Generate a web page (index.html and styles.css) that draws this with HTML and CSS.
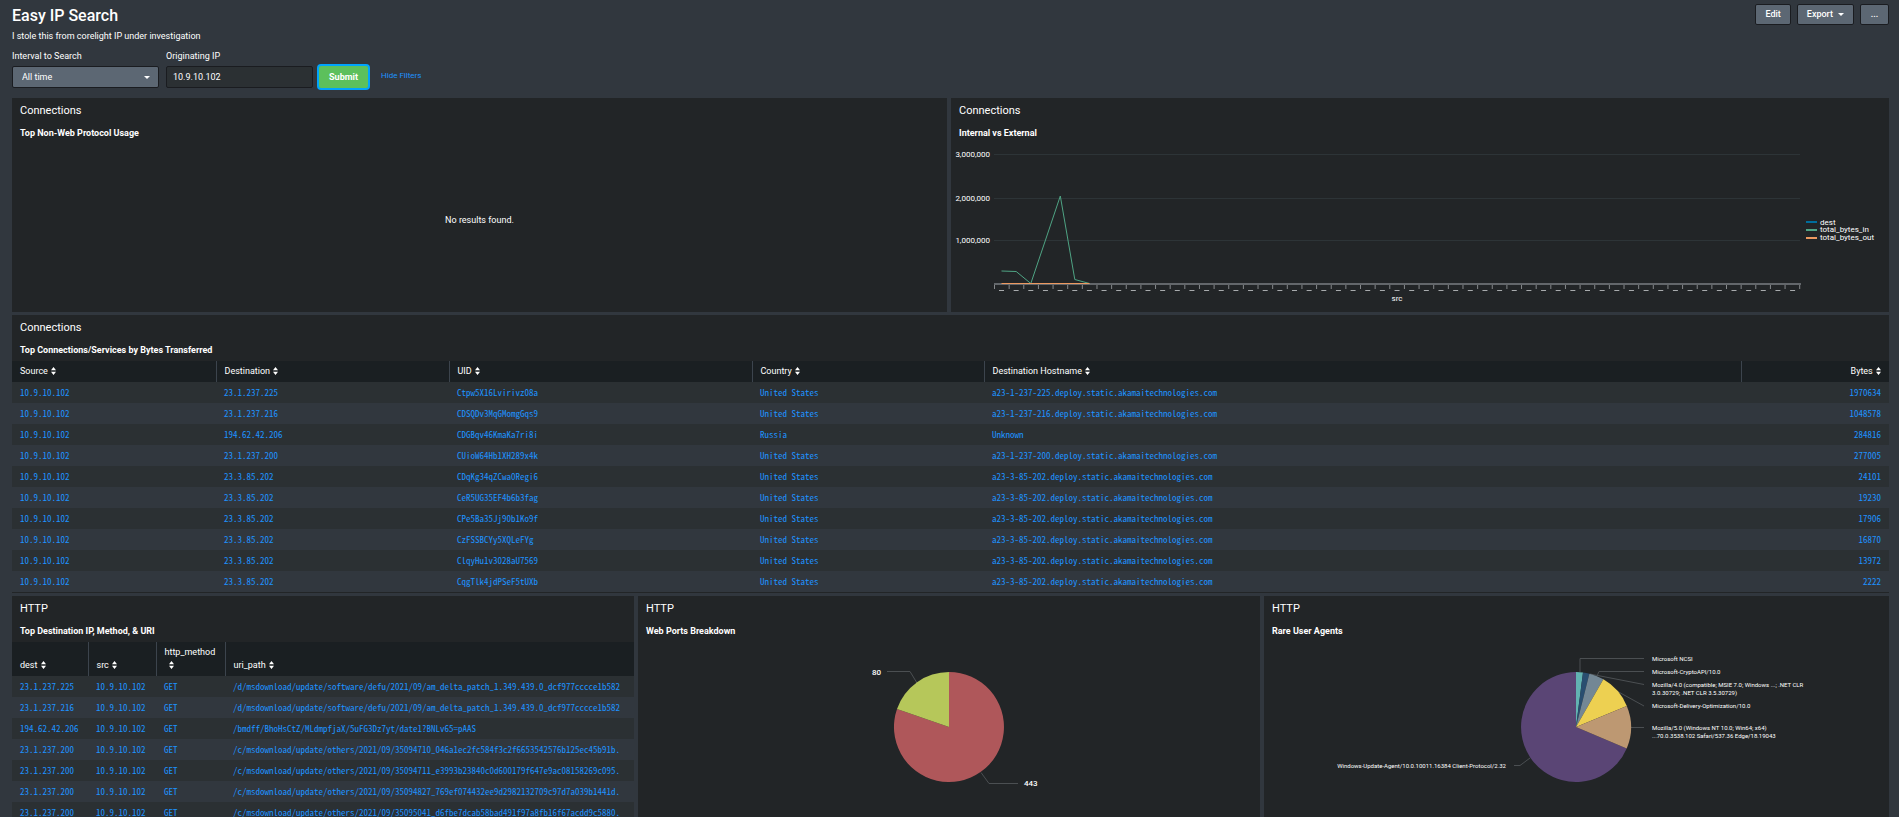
FILE: index.html
```html
<!DOCTYPE html>
<html lang="en">
<head>
<meta charset="utf-8">
<title>Easy IP Search</title>
<link rel="stylesheet" href="styles.css">
</head>
<body>
<svg class="defs" width="0" height="0" aria-hidden="true">
  <symbol id="sort" viewBox="0 0 5 8"><path d="M2.5 0L5 3.3H0zM2.5 8L0 4.7h5z"/></symbol>
</svg>
<header class="top">
  <div>
    <h1>Easy IP Search</h1>
    <p class="desc">I stole this from corelight IP under investigation</p>
  </div>
  <div class="actions">
    <button type="button" class="btn">Edit</button>
    <button type="button" class="btn">Export <span class="caret"></span></button>
    <button type="button" class="btn">...</button>
  </div>
</header>
<form class="filters">
  <div class="field">
    <label for="interval">Interval to Search</label>
    <div class="pick">
      <select id="interval"><option>All time</option></select>
      <span class="caret"></span>
    </div>
  </div>
  <div class="field">
    <label for="ip">Originating IP</label>
    <input id="ip" type="text" value="10.9.10.102">
  </div>
  <button type="button" class="submit">Submit</button>
  <a class="hide" href="#">Hide Filters</a>
</form>
<main>
  <div class="row two">
    <section class="panel empty">
      <h2>Connections</h2>
      <h3>Top Non-Web Protocol Usage</h3>
      <p class="none">No results found.</p>
    </section>
    <section class="panel">
      <h2>Connections</h2>
      <h3>Internal vs External</h3>
      <svg class="chart" viewBox="0 2 938 168">
        <path class="grid" d="M43 12.5H849M43 56.5H849M43 98.5H849"/>
        <g class="axis" text-anchor="end">
          <text x="39" y="15">3,000,000</text>
          <text x="39" y="59">2,000,000</text>
          <text x="39" y="101">1,000,000</text>
        </g>
        <path class="base" d="M43 142H850"/>
        <path class="ticks" d="M43 145H850"/>
        <path class="names" d="M48 148.500H849"/>
        <polyline class="in" points="50.5,129 65.2,129.500 79.8,141.500 94.500,98 109.300,54 123.800,137.500 138.500,141.500"/>
        <path class="out" d="M50.500 141.500H138.500"/>
        <text class="axis" x="446" y="159" text-anchor="middle">src</text>
        <path class="l-dest" d="M855 80H866"/>
        <path class="l-in" d="M855 88H866"/>
        <path class="l-out" d="M855 96H866"/>
        <g class="legend">
          <text x="869" y="83">dest</text>
          <text x="869" y="90">total_bytes_in</text>
          <text x="869" y="98">total_bytes_out</text>
        </g>
      </svg>
    </section>
  </div>
  <section class="panel table-panel">
    <h2>Connections</h2>
    <h3>Top Connections/Services by Bytes Transferred</h3>
    <table class="conn">
      <colgroup><col class="c-src"><col class="c-dst"><col class="c-uid"><col class="c-cty"><col class="c-host"><col class="c-bytes"></colgroup>
      <thead><tr>
        <th>Source <svg class="sort"><use href="#sort"/></svg></th>
        <th>Destination <svg class="sort"><use href="#sort"/></svg></th>
        <th>UID <svg class="sort"><use href="#sort"/></svg></th>
        <th>Country <svg class="sort"><use href="#sort"/></svg></th>
        <th>Destination Hostname <svg class="sort"><use href="#sort"/></svg></th>
        <th class="num">Bytes <svg class="sort"><use href="#sort"/></svg></th>
      </tr></thead>
      <tbody>
        <tr><td>10.9.10.102</td><td>23.1.237.225</td><td>Ctpw5X16Lvirivz08a</td><td>United States</td><td>a23-1-237-225.deploy.static.akamaitechnologies.com</td><td class="num">1970634</td></tr>
        <tr><td>10.9.10.102</td><td>23.1.237.216</td><td>CDSQDv3MqGMomgGqs9</td><td>United States</td><td>a23-1-237-216.deploy.static.akamaitechnologies.com</td><td class="num">1048578</td></tr>
        <tr><td>10.9.10.102</td><td>194.62.42.206</td><td>CDGBqv46KmaKa7ri8i</td><td>Russia</td><td>Unknown</td><td class="num">284816</td></tr>
        <tr><td>10.9.10.102</td><td>23.1.237.200</td><td>CUioW64Hb1XH289x4k</td><td>United States</td><td>a23-1-237-200.deploy.static.akamaitechnologies.com</td><td class="num">277005</td></tr>
        <tr><td>10.9.10.102</td><td>23.3.85.202</td><td>CDqKg34qZCwa0Regi6</td><td>United States</td><td>a23-3-85-202.deploy.static.akamaitechnologies.com</td><td class="num">24101</td></tr>
        <tr><td>10.9.10.102</td><td>23.3.85.202</td><td>CeR5UG35EF4b6b3fag</td><td>United States</td><td>a23-3-85-202.deploy.static.akamaitechnologies.com</td><td class="num">19230</td></tr>
        <tr><td>10.9.10.102</td><td>23.3.85.202</td><td>CPe5Ba35Jj90b1Ko9f</td><td>United States</td><td>a23-3-85-202.deploy.static.akamaitechnologies.com</td><td class="num">17906</td></tr>
        <tr><td>10.9.10.102</td><td>23.3.85.202</td><td>CzFSSBCYy5XQLeFYg</td><td>United States</td><td>a23-3-85-202.deploy.static.akamaitechnologies.com</td><td class="num">16870</td></tr>
        <tr><td>10.9.10.102</td><td>23.3.85.202</td><td>ClqyHu1v3028aU7569</td><td>United States</td><td>a23-3-85-202.deploy.static.akamaitechnologies.com</td><td class="num">13972</td></tr>
        <tr><td>10.9.10.102</td><td>23.3.85.202</td><td>CqgTlk4jdPSeF5tUXb</td><td>United States</td><td>a23-3-85-202.deploy.static.akamaitechnologies.com</td><td class="num">2222</td></tr>
      </tbody>
    </table>
  </section>
  <div class="row three">
    <section class="panel">
      <h2>HTTP</h2>
      <h3>Top Destination IP, Method, &amp; URI</h3>
      <table class="http">
        <colgroup><col class="h-dest"><col class="h-src"><col class="h-method"><col></colgroup>
        <thead><tr>
          <th>dest <svg class="sort"><use href="#sort"/></svg></th>
          <th>src <svg class="sort"><use href="#sort"/></svg></th>
          <th class="wrap">http_method <svg class="sort"><use href="#sort"/></svg></th>
          <th>uri_path <svg class="sort"><use href="#sort"/></svg></th>
        </tr></thead>
        <tbody>
          <tr><td>23.1.237.225</td><td>10.9.10.102</td><td>GET</td><td>/d/msdownload/update/software/defu/2021/09/am_delta_patch_1.349.439.0_dcf977cccce1b582</td></tr>
          <tr><td>23.1.237.216</td><td>10.9.10.102</td><td>GET</td><td>/d/msdownload/update/software/defu/2021/09/am_delta_patch_1.349.439.0_dcf977cccce1b582</td></tr>
          <tr><td>194.62.42.206</td><td>10.9.10.102</td><td>GET</td><td>/bmdff/BhoHsCtZ/MLdmpfjaX/5uFG3Dz7yt/date1?BNLv65=pAAS</td></tr>
          <tr><td>23.1.237.200</td><td>10.9.10.102</td><td>GET</td><td>/c/msdownload/update/others/2021/09/35094710_046a1ec2fc584f3c2f6653542576b125ec45b91b.</td></tr>
          <tr><td>23.1.237.200</td><td>10.9.10.102</td><td>GET</td><td>/c/msdownload/update/others/2021/09/35094711_e3993b23840c0d600179f647e9ac08158269c095.</td></tr>
          <tr><td>23.1.237.200</td><td>10.9.10.102</td><td>GET</td><td>/c/msdownload/update/others/2021/09/35094827_769ef074432ee9d2982132709c97d7a039b1441d.</td></tr>
          <tr><td>23.1.237.200</td><td>10.9.10.102</td><td>GET</td><td>/c/msdownload/update/others/2021/09/35095041_d6fbe7dcab58bad491f97a8fb16f67acdd9c5880.</td></tr>
        </tbody>
      </table>
    </section>
    <section class="panel">
      <h2>HTTP</h2>
      <h3>Web Ports Breakdown</h3>
      <svg class="chart" viewBox="0 -1 622 182">
        <path class="lead" d="M249 28.500H272L279 40M343 129.500L351 140.500H380"/>
        <path fill="#af575a" d="M311 84V29A55 55 0 1 1 259 66z"/>
        <path fill="#b6c75a" d="M311 84L259 66A55 55 0 0 1 311 29z"/>
        <g class="ports">
          <text x="243" y="32" text-anchor="end">80</text>
          <text x="386" y="143">443</text>
        </g>
      </svg>
    </section>
    <section class="panel">
      <h2>HTTP</h2>
      <h3>Rare User Agents</h3>
      <svg class="chart" viewBox="0 -1 625 182">
        <path class="lead" d="M316 29V15.500H380M333 33L335 28.500H380M326 31L380 41.500M351 47L380 63M367 84.500H380M266 115L256 122.500H250"/>
        <path fill="#5a4575" d="M312 84L362.700 105.400A55 55 0 1 1 312 29z"/>
        <path fill="#62b3b2" d="M312 84V29A55 55 0 0 1 319 29.400z"/>
        <path fill="#294e70" d="M312 84L319 29.400A55 55 0 0 1 325.400 30.700z"/>
        <path fill="#738795" d="M312 84L325.400 30.700A55 55 0 0 1 339.400 36.300z"/>
        <path fill="#edd051" d="M312 84L339.400 36.300A55 55 0 0 1 362.800 62.900z"/>
        <path fill="#bd9872" d="M312 84L362.800 62.900A55 55 0 0 1 362.700 105.400z"/>
        <g class="agents">
          <text x="388" y="18">Microsoft NCSI</text>
          <text x="388" y="31">Microsoft-CryptoAPI/10.0</text>
          <text x="388" y="44">Mozilla/4.0 (compatible; MSIE 7.0; Windows ...; .NET CLR</text>
          <text x="388" y="52">3.0.30729; .NET CLR 3.5.30729)</text>
          <text x="388" y="65">Microsoft-Delivery-Optimization/10.0</text>
          <text x="388" y="87">Mozilla/5.0 (Windows NT 10.0; Win64; x64)</text>
          <text x="388" y="95">...70.0.3538.102 Safari/537.36 Edge/18.19043</text>
          <text x="242" y="125" text-anchor="end">Windows-Update-Agent/10.0.10011.16384 Client-Protocol/2.32</text>
        </g>
      </svg>
    </section>
  </div>
</main>
</body>
</html>
```
FILE: styles.css
```css
* { box-sizing: border-box; }
body {
  margin: 0;
  padding: 4px 10px 0 12px;
  height: 100vh;
  overflow: hidden;
  background: #31373e;
  color: #fff;
  font: 9px/13px Roboto, sans-serif;
}
.defs { position: absolute; }
h1, h2, h3, p { margin: 0; }
button, input, select { font: inherit; color: inherit; }

.top { display: flex; justify-content: space-between; align-items: flex-start; }
h1 { font-size: 16px; line-height: 24px; font-weight: 500; }
.desc { line-height: 16px; }
.actions { display: flex; gap: 6px; }
.btn {
  display: flex;
  align-items: center;
  justify-content: center;
  gap: 5px;
  height: 21px;
  min-width: 29px;
  padding: 0 9px;
  border: 1px solid #1a1c20;
  border-radius: 2px;
  background: #5c6773;
  font-weight: 500;
}
.caret {
  width: 0;
  height: 0;
  border: 3px solid transparent;
  border-top-color: #fff;
  border-bottom: 0;
}

.filters { display: flex; align-items: flex-end; margin: 5px 0 10px; }
.field { width: 147px; margin-right: 7px; }
.field label { display: block; line-height: 14px; margin-bottom: 3px; }
.pick { display: grid; align-items: center; }
.pick > * { grid-area: 1 / 1; }
.pick .caret { justify-self: end; margin-right: 9px; pointer-events: none; }
.field select, .field input {
  display: block;
  width: 100%;
  height: 22px;
  border: 1px solid #1a1c20;
  border-radius: 2px;
}
.field select { appearance: none; padding: 0 9px; background: #5c6773; }
.field input { padding: 0 6px; background: #2b3033; }
.submit {
  height: 22px;
  width: 49px;
  margin-left: -1px;
  padding: 0;
  border: 0;
  border-radius: 2px;
  background: #5cc05c;
  box-shadow: 0 0 0 2px #00a4fd;
  font-weight: 700;
}
.hide { margin-left: 13px; font-size: 8px; line-height: 24px; color: #1e93ff; text-decoration: none; }

main { display: grid; gap: 3px; }
.row { display: grid; gap: 4px; }
.two { grid-template-columns: 935fr 938fr; }
.three { grid-template-columns: 622fr 622fr 625fr; }
.panel { min-width: 0; overflow: hidden; background: #222527; }
.table-panel { padding-bottom: 1px; }
.empty { display: flex; flex-direction: column; }
h2 { padding: 0 8px; font-size: 11px; line-height: 26px; font-weight: 400; }
h3 { padding: 0 8px 2px; font-size: 9px; line-height: 18px; font-weight: 700; }
.none { flex: 1; padding-top: 70px; text-align: center; }
.chart { display: block; width: 100%; height: auto; }

.grid { stroke: #2d3437; }
.base { stroke: #63676b; stroke-width: 2; }
.ticks { stroke: #85888b; stroke-width: 4; stroke-dasharray: 1 13.64; }
.names { stroke: #a8abad; stroke-dasharray: 5 9.65; }
.in, .out { fill: none; }
.in, .l-in { stroke: #4fa484; }
.out, .l-out { stroke: #ec9960; }
.l-dest { stroke: #006d9c; }
.l-dest, .l-in, .l-out { stroke-width: 2; }
.axis, .legend { font-size: 8px; fill: #fff; }
.lead { fill: none; stroke: #4b4f52; }
.ports { font-size: 8px; fill: #fff; font-weight: 500; }
.agents { font-size: 6px; fill: #fff; }

table { width: 100%; border-collapse: collapse; table-layout: fixed; }
th {
  padding: 4px 8px;
  background: #1a1f22;
  border-left: 1px solid #3c444d;
  font-weight: 400;
  text-align: left;
  vertical-align: bottom;
  white-space: nowrap;
}
th:first-child { border-left: 0; }
th.wrap { white-space: normal; }
td {
  padding: 4px 8px;
  color: #1e93ff;
  font: 9px/13px "Noto Sans Mono CJK JP", "Noto Sans Mono CJK SC", "Liberation Mono", monospace;
  white-space: nowrap;
}
tbody tr { background: #31373e; }
tbody tr:nth-child(odd) { background: #2b3033; }
th.num, td.num { text-align: right; }
.sort { width: 5px; height: 8px; margin-left: 1px; fill: #fff; vertical-align: -1px; }
.wrap .sort { margin-left: 4px; }
.c-src { width: 204px; }
.c-dst { width: 233px; }
.c-uid { width: 303px; }
.c-cty { width: 232px; }
.c-bytes { width: 148px; }
.h-dest { width: 76px; }
.h-src { width: 68px; }
.h-method { width: 69px; }
```
